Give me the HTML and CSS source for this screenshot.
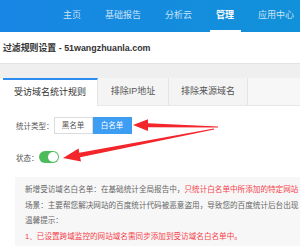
FILE: index.html
```html
<!DOCTYPE html>
<html lang="zh-CN">
<head>
  <meta charset="UTF-8">
  <meta name="viewport" content="width=device-width, initial-scale=1.0">
  <title>过滤规则设置</title>
  <link rel="stylesheet" href="styles.css">
</head>
<body>
  <header class="topbar">
    <nav class="nav">
      <a class="nav-item">主页</a>
      <a class="nav-item">基础报告</a>
      <a class="nav-item">分析云</a>
      <a class="nav-item active">管理</a>
      <a class="nav-item">应用中心</a>
    </nav>
  </header>

  <div class="page-title">过滤规则设置 - 51wangzhuanla.com</div>

  <div class="band"></div>

  <div class="panel">
    <div class="tabs">
      <div class="tab active">受访域名统计规则</div>
      <div class="tab">排除IP地址</div>
      <div class="tab">排除来源域名</div>
    </div>

    <div class="panel-body">
      <div class="form-row">
        <span class="label">统计类型：</span>
        <div class="btn-group">
          <span class="btn">黑名单</span>
          <span class="btn selected">白名单</span>
        </div>
      </div>

      <div class="form-row status-row">
        <span class="label">状态：</span>
        <span class="switch on"><span class="knob"></span></span>
      </div>

      <div class="notice">
        <p>新增受访域名白名单：在基础统计全局报告中，<span class="red">只统计白名单中所添加的特定网站</span></p>
        <p>场景：主要帮您解决网站的百度统计代码被恶意盗用，导致您的百度统计后台出现</p>
        <p>温馨提示：</p>
        <p class="red">1、已设置跨域监控的网站域名需同步添加到受访域名白名单中。</p>
      </div>
    </div>
  </div>

  <!-- annotation arrows drawn over the page -->
  <svg class="marks" width="300" height="246" viewBox="0 0 300 246">
    <polygon points="218,126.4 148,123.2 148,119.2 133,125 148,131 148,127.2 218,127.6" fill="#f2262b"/>
    <polygon points="214.1,129.6 80.1,157.2 81,161.6 63,158 78.6,148.4 79.3,152.8 213.9,128.4" fill="#f2262b"/>
  </svg>
</body>
</html>
```

FILE: styles.css
```css
* {
  margin: 0;
  padding: 0;
  box-sizing: border-box;
}

body {
  width: 300px;
  height: 246px;
  overflow: hidden;
  position: relative;
  background: #fff;
  font-family: "Liberation Sans", "Noto Sans CJK SC", sans-serif;
  color: #555;
}

.topbar {
  height: 32px;
  background: linear-gradient(90deg, #1886e4, #1191d9);
  overflow: hidden;
}

.nav {
  display: flex;
  padding-left: 51px;
  white-space: nowrap;
}

.nav-item {
  position: relative;
  height: 32px;
  line-height: 30px;
  padding: 0 12px;
  font-size: 9px;
  color: rgba(255, 255, 255, 0.78);
}

.nav-item.active {
  color: #fff;
  font-weight: bold;
}

.nav-item.active::after {
  content: "";
  position: absolute;
  left: 50%;
  bottom: 0;
  width: 31px;
  height: 2px;
  margin-left: -15px;
  background: #fff;
}

.page-title {
  height: 31px;
  line-height: 33px;
  padding-left: 3px;
  font-size: 8.9px;
  font-weight: bold;
  color: #333;
  white-space: nowrap;
}

.band {
  height: 15px;
  background: #efefef;
  border-top: 1px solid #e2e2e2;
}

.panel {
  margin-left: 3px;
  background: #fff;
}

.tabs {
  display: flex;
  height: 28px;
  background: #f7f7f7;
  border-bottom: 1px solid #e8e8e8;
}

.tab {
  line-height: 27px;
  font-size: 9px;
  text-align: center;
  color: #555;
  background: #f4f4f4;
  border-right: 1px solid #e4e4e4;
  white-space: nowrap;
}

.tab:nth-child(1) { width: 95px; }
.tab:nth-child(2) { width: 71px; }
.tab:nth-child(3) { width: 79px; }

.tab.active {
  background: #fff;
  color: #333;
  border-top: 2px solid #2d8cf0;
  line-height: 25px;
  height: 28px;
}

.panel-body {
  padding: 11px 0 0 13px;
}

.form-row {
  display: flex;
  align-items: center;
  height: 17px;
}

.label {
  font-size: 7.5px;
  color: #555;
  white-space: nowrap;
}

.btn-group {
  display: flex;
}

.btn {
  width: 39px;
  height: 17px;
  line-height: 15px;
  font-size: 7.5px;
  text-align: center;
  color: #555;
  border: 1px solid #dcdcdc;
}

.btn.selected {
  background: #3d9df2;
  border-color: #3d9df2;
  color: #fff;
}

.status-row {
  margin-top: 17px;
  height: 12px;
}

.switch {
  display: flex;
  justify-content: flex-end;
  align-items: center;
  width: 20px;
  height: 12px;
  padding: 0 1px;
  border-radius: 6px;
  background: #4cbb5a;
}

.knob {
  width: 10px;
  height: 10px;
  border-radius: 50%;
  background: #fff;
}

.notice {
  width: 420px;
  margin: 14px 0 0 -1px;
  padding: 5px 10px 10px;
  background: #f7f7f7;
  font-size: 7.6px;
  line-height: 15.5px;
  color: #666;
  white-space: nowrap;
}

.red {
  color: #f5414a;
}

.marks {
  position: absolute;
  left: 0;
  top: 0;
  pointer-events: none;
}
```
